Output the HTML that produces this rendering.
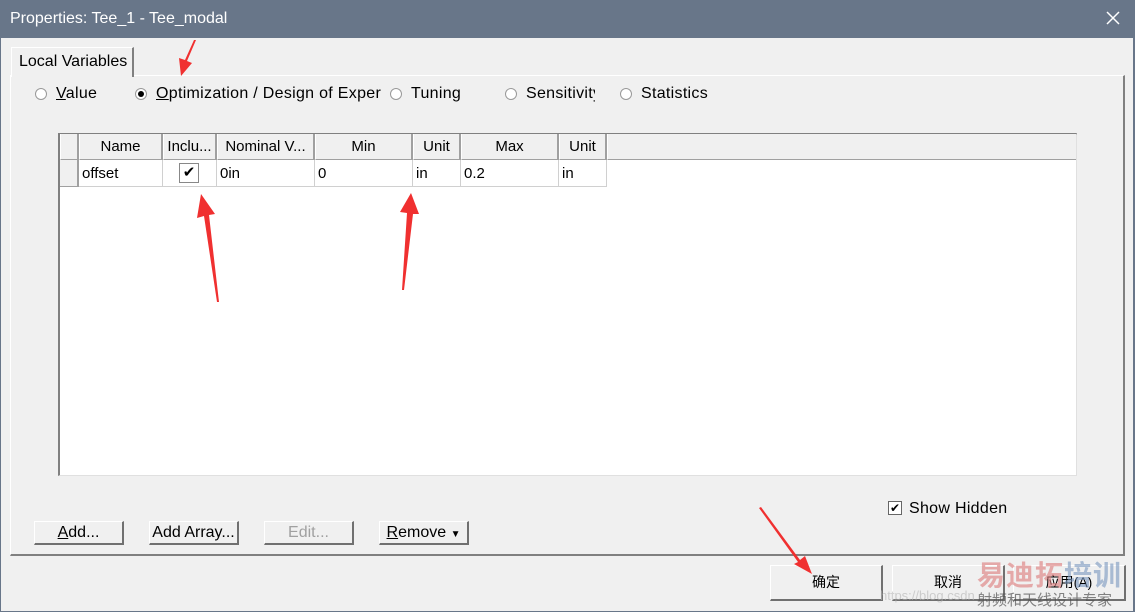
<!DOCTYPE html>
<html><head><meta charset="utf-8"><style>
*{margin:0;padding:0;box-sizing:border-box}
body{width:1135px;height:612px;overflow:hidden;background:#f0f0f0;font-family:"Liberation Sans","Noto Sans CJK SC",sans-serif;font-size:16px;color:#000;position:relative}
.a{position:absolute}
.title{left:0;top:0;width:1135px;height:38px;background:#687689;color:#fff;font-size:16px;line-height:38px;padding-left:10px}
.frame{left:0;top:38px;width:1135px;height:574px;border-left:1px solid #687689;border-right:2px solid #687689;border-bottom:1px solid #687689}
.panel{left:10px;top:75px;width:1115px;height:481px;border-left:1px solid #fff;border-top:1px solid #fff;border-right:2px solid #808080;border-bottom:2px solid #808080}
.tab{left:11px;top:47px;width:123px;height:30px;background:#f0f0f0;border:1px solid #fff;border-bottom:none;border-right:2px solid #808080;line-height:28px;padding-left:7px}
.radio{width:12px;height:12px;border-radius:50%;border:1px solid #999;background:#fff;top:88px}
.dot{width:6px;height:6px;border-radius:50%;background:#000;left:2px;top:2px}
.lbl{top:84px;line-height:20px;letter-spacing:0.3px}
.grid{left:58px;top:133px;width:1019px;height:343px;background:#fff;border-left:2px solid #808080;border-top:2px solid #808080;border-right:1px solid #e0e0e0;border-bottom:1px solid #e0e0e0}
.h{top:134px;height:26px;background:#f0f0f0;border-right:2px solid #a0a0a0;border-bottom:1px solid #a0a0a0;text-align:center;line-height:25px;border-left:1px solid #fff;font-size:15px;white-space:nowrap;overflow:hidden}
.c{top:160px;height:27px;border-right:1px solid #d0d0d0;border-bottom:1px solid #d0d0d0;line-height:27px;padding-left:3px;font-size:15px}
.btn{height:24px;border:1px solid #fff;border-right:2px solid #707070;border-bottom:2px solid #707070;background:#f0f0f0;text-align:center;line-height:21px;top:521px}
.bb{height:36px;top:565px;border:1px solid #fff;border-right:2px solid #707070;border-bottom:2px solid #707070;text-align:center;line-height:33px;font-size:14px}
u{text-decoration:underline}
</style></head><body>
<div class="a title">Properties: Tee_1 - Tee_modal</div>
<svg class="a" style="left:1106px;top:11px" width="14" height="14"><path d="M1 1L13 13M13 1L1 13" stroke="#fff" stroke-width="1.5"/></svg>
<div class="a frame"></div>
<div class="a panel"></div>
<div class="a tab">Local Variables</div>

<div class="a radio" style="left:35px"></div><div class="a lbl" style="left:56px"><u>V</u>alue</div>
<div class="a radio" style="left:135px"><div class="a dot"></div></div><div class="a lbl" style="left:156px"><u>O</u>ptimization / Design of Exper</div>
<div class="a radio" style="left:390px"></div><div class="a lbl" style="left:411px">Tuning</div>
<div class="a radio" style="left:505px"></div><div class="a lbl" style="left:526px;width:69px;overflow:hidden;white-space:nowrap">Sensitivity</div>
<div class="a radio" style="left:620px"></div><div class="a lbl" style="left:641px">Statistics</div>

<div class="a grid"></div>
<div class="a h" style="left:60px;width:19px"></div>
<div class="a h" style="left:79px;width:84px">Name</div>
<div class="a h" style="left:163px;width:54px">Inclu...</div>
<div class="a h" style="left:217px;width:98px">Nominal V...</div>
<div class="a h" style="left:315px;width:98px">Min</div>
<div class="a h" style="left:413px;width:48px">Unit</div>
<div class="a h" style="left:461px;width:98px">Max</div>
<div class="a h" style="left:559px;width:48px">Unit</div>
<div class="a h" style="left:607px;width:469px;border-right:none"></div>
<div class="a" style="left:60px;top:160px;width:19px;height:27px;background:#f0f0f0;border-right:2px solid #a0a0a0;border-bottom:1px solid #a0a0a0"></div>
<div class="a c" style="left:79px;width:84px">offset</div>
<div class="a c" style="left:163px;width:54px"><div class="a" style="left:16px;top:3px;width:20px;height:20px;border:1px solid #888;background:#fff;font-size:15px;line-height:18px;text-align:center">✔</div></div>
<div class="a c" style="left:217px;width:98px">0in</div>
<div class="a c" style="left:315px;width:98px">0</div>
<div class="a c" style="left:413px;width:48px">in</div>
<div class="a c" style="left:461px;width:98px">0.2</div>
<div class="a c" style="left:559px;width:48px">in</div>

<div class="a" style="left:888px;top:501px;width:14px;height:14px;border:1px solid #666;background:#fff;font-size:12px;line-height:12px;text-align:center">✔</div>
<div class="a" style="left:909px;top:499px;line-height:20px;letter-spacing:0.3px">Show Hidden</div>

<div class="a btn" style="left:34px;width:90px"><u>A</u>dd...</div>
<div class="a btn" style="left:149px;width:90px">Add Array...</div>
<div class="a btn" style="left:264px;width:90px;color:#a0a0a0">Edit...</div>
<div class="a btn" style="left:379px;width:90px"><u>R</u>emove <span style="font-size:10px">▼</span></div>

<div class="a bb" style="left:770px;width:113px">确定</div>
<div class="a bb" style="left:892px;width:113px">取消</div>
<div class="a bb" style="left:1013px;width:113px">应用(A)</div>

<div class="a" style="left:977px;top:554px;font-size:28px;font-weight:bold;color:rgba(220,120,120,.6);letter-spacing:1px">易迪拓<span style="color:rgba(120,150,190,.6)">培训</span></div>
<div class="a" style="left:977px;top:589px;font-size:15px;color:rgba(80,80,80,.7)">射频和天线设计专家</div>
<div class="a" style="left:880px;top:588px;font-size:13px;color:rgba(180,180,180,.6)">https://blog.csdn</div>

<svg class="a" style="left:0;top:0" width="1135" height="612">
<g fill="#f03030">
<polygon points="196,40 194,40 185,60 179,58 181,76 192,63 187,61"/>
<polygon points="217,302 219,302 209,215 215,214 201,194 197,218 204,216"/>
<polygon points="402,290 404,290 413,214 419,214 411,193 400,212 407,213"/>
<polygon points="759,508 761,507 800,560 805,556 812,574 794,564 798,562"/>
</g>
</svg>
</body></html>
